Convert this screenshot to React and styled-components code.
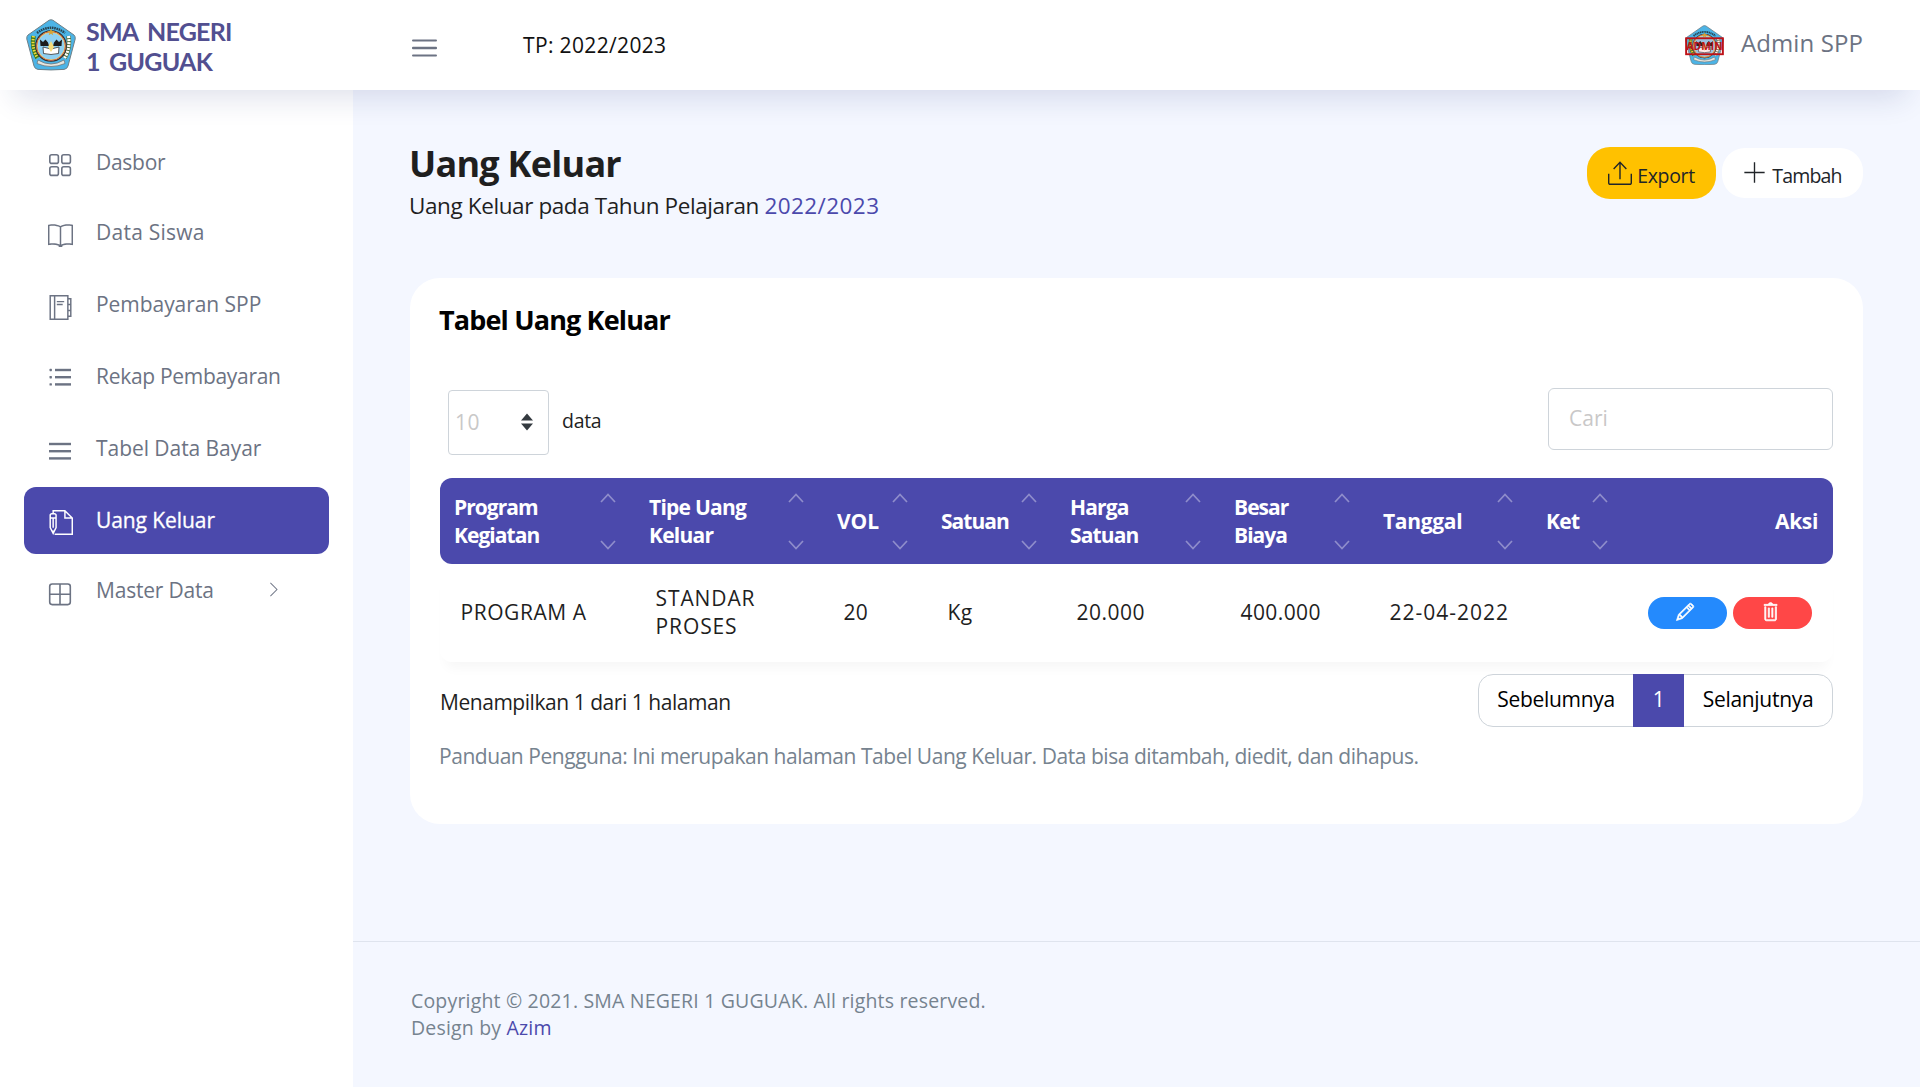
import React from "react";
import styled, { createGlobalStyle } from "styled-components";
import {
  TfiBook,
  TfiAgenda,
  TfiWrite,
  TfiExport,
  TfiPlus,
  TfiPencil,
  TfiTrash,
  TfiAngleRight,
} from "react-icons/tfi";

const PRIMARY = "#4b49ac";

const GlobalStyle = createGlobalStyle`
  *, *::before, *::after { box-sizing: border-box; }
  body {
    margin: 0;
    background: #f4f7ff;
    color: #1f1f1f;
    font-family: "Open Sans", "Noto Sans", sans-serif;
    font-size: 21px;
    line-height: 28px;
  }
`;

const Page = styled.div`
  display: flex;
  flex-direction: column;
  min-height: 1087px;
`;

const Navbar = styled.header`
  position: relative;
  z-index: 2;
  display: flex;
  align-items: center;
  height: 90px;
  padding: 0 57px 0 26px;
  background: #fff;
  box-shadow: 0 22px 30px -14px rgba(31, 45, 110, 0.14);
`;

const Brand = styled.div`
  display: flex;
  align-items: center;
  gap: 10px;
  width: 386px;
`;

const BrandName = styled.div`
  padding-top: 1px;
  color: #524f90;
  font-family: "Lato", sans-serif;
  font-size: 25px;
  font-weight: 700;
  line-height: 30px;
  letter-spacing: -0.75px;
  word-spacing: 4px;
  white-space: nowrap;
`;

const Term = styled.div`
  margin-left: 86px;
  margin-top: -1px;
  color: #111;
  letter-spacing: 0.35px;
`;

const Profile = styled.div`
  display: flex;
  align-items: center;
  gap: 17px;
  margin-left: auto;
  color: #6c7383;
  font-size: 24px;
  letter-spacing: 0.1px;
`;

const ProfileName = styled.span`
  margin-top: -4px;
`;

const Main = styled.div`
  display: flex;
  flex: 1;
`;

const Sidebar = styled.nav`
  display: flex;
  flex-direction: column;
  gap: 5px;
  width: 353px;
  padding: 39px 24px 0;
  background: #fff;
`;

const NavItem = styled.a`
  display: flex;
  align-items: center;
  width: 305px;
  height: ${(p) => (p.$short ? 65 : 67)}px;
  padding: ${(p) => (p.$short ? 2 : 1)}px 0 2px 24px;
  border-radius: 12px;
  color: ${(p) => (p.$active ? "#fff" : "#6c7383")};
  background: ${(p) => (p.$active ? PRIMARY : "transparent")};
  letter-spacing: ${(p) => p.$ls}px;
  ${(p) => p.$active && "margin-bottom: -2px; -webkit-text-stroke: 0.3px #fff;"}

  > svg:first-child {
    flex: none;
    width: 25px;
    height: 25px;
    margin-right: 23px;
    margin-top: ${(p) => p.$drop}px;
  }
`;

const NavLabel = styled.span`
  width: ${(p) => (p.$chevron ? "170px" : "auto")};
  white-space: nowrap;
`;

const Content = styled.main`
  display: flex;
  flex: 1;
  flex-direction: column;
`;

const Wrapper = styled.div`
  height: 851px;
  padding: 52px 57px 0;
`;

const Heading = styled.div`
  display: flex;
  justify-content: space-between;
  height: 136px;
`;

const Title = styled.h3`
  margin: 0 0 0 -1px;
  font-size: 36px;
  font-weight: 700;
  line-height: 44px;
  letter-spacing: -0.75px;
`;

const Subtitle = styled.p`
  margin: 4px 0 0 -1px;
  font-size: 22.5px;
  line-height: 32px;
  letter-spacing: -0.4px;
  span {
    color: ${PRIMARY};
    letter-spacing: 0.43px;
  }
`;

const Actions = styled.div`
  display: flex;
  align-items: flex-start;
  gap: 6px;
  padding-top: 5px;
`;

const ActionButton = styled.button`
  display: flex;
  align-items: center;
  justify-content: center;
  gap: ${(p) => (p.$yellow ? 5 : 6)}px;
  width: ${(p) => (p.$yellow ? 129 : 141)}px;
  height: ${(p) => (p.$yellow ? 52 : 50)}px;
  margin-top: ${(p) => (p.$yellow ? 0 : 1)}px;
  padding: 0;
  border: 0;
  border-radius: 23px;
  background: ${(p) => (p.$yellow ? "#ffc100" : "#fff")};
  color: #212529;
  font-family: inherit;
  font-size: 19.5px;
  letter-spacing: ${(p) => (p.$yellow ? -0.33 : -0.8)}px;
  span {
    padding-top: 4px;
  }
  svg {
    margin-top: -1px;
  }
`;

const Card = styled.section`
  height: 546px;
  padding: 24px 30px 0;
  border-radius: 30px;
  background: #fff;
`;

const CardTitle = styled.h4`
  margin: 0 0 0 -1px;
  color: #010101;
  font-size: 27px;
  font-weight: 700;
  line-height: 36px;
  letter-spacing: -0.85px;
`;

const Controls = styled.div`
  display: flex;
  justify-content: space-between;
  margin-top: 50px;
  height: 90px;
`;

const Length = styled.label`
  display: flex;
  align-items: center;
  gap: 13px;
  height: 67px;
  padding: 2px 0 0 8px;
  font-size: 19.5px;
  letter-spacing: -0.3px;
  > span {
    margin-top: -4px;
  }
`;

const Select = styled.div`
  display: flex;
  align-items: center;
  justify-content: space-between;
  width: 101px;
  height: 65px;
  padding: 0 15px 2px 6px;
  border: 1px solid #ced4da;
  border-radius: 4px;
  color: #c9c8c8;
  font-size: 21px;
  letter-spacing: 0.4px;
`;

const Search = styled.input`
  width: 285px;
  height: 62px;
  padding: 0 20px 2px;
  border: 1px solid #ced4da;
  border-radius: 6px;
  font-family: inherit;
  font-size: 21px;
  &::placeholder {
    color: #c9c8c8;
    opacity: 1;
  }
`;

const Row = styled.div`
  display: grid;
  grid-template-columns: 195px 188px 104px 129px 164px 149px 163px 95px 1fr;
  align-items: center;
`;

const HeadRow = styled(Row)`
  height: 86px;
  padding-bottom: 1px;
  border-radius: 12px;
  background: ${PRIMARY};
  color: #fff;
  font-weight: 700;
`;

const HeadCell = styled.div`
  display: flex;
  align-items: center;
  justify-content: ${(p) => (p.$end ? "flex-end" : "space-between")};
  padding: 0 ${(p) => (p.$end ? 15 : 19)}px 0 14px;
  letter-spacing: ${(p) => p.$ls}px;
  white-space: pre-line;
`;

const BodyRow = styled(Row)`
  height: 98px;
  padding-bottom: 2px;
  border-radius: 12px;
  box-shadow: 0 12px 12px -6px rgba(0, 0, 0, 0.035);
`;

const Cell = styled.div`
  padding-left: 20.5px;
  letter-spacing: ${(p) => p.$ls}px;
  white-space: pre-line;
`;

const RowActions = styled.div`
  display: flex;
  justify-content: flex-end;
  gap: 6px;
  padding: 2px 21px 0 0;
`;

const Pill = styled.button`
  display: flex;
  align-items: center;
  justify-content: center;
  width: 79px;
  height: 32px;
  padding: 0 6px 3px 0;
  border: 0;
  border-radius: 16px;
  background: ${(p) => p.$color};
  color: #fff;
  svg {
    stroke-width: 0.6;
  }
`;

const TableFoot = styled.div`
  display: flex;
  justify-content: space-between;
  margin-top: 12px;
  height: 53px;
`;

const Info = styled.div`
  padding-top: 14px;
  letter-spacing: -0.46px;
`;

const Pagination = styled.div`
  display: flex;
  width: 355px;
  height: 53px;
  border: 1px solid #ced4da;
  border-radius: 15px;
  color: #000;
`;

const PageLink = styled.a`
  display: flex;
  flex: ${(p) => (p.$active ? "0 0 51px" : p.$prev ? "0 0 154px" : "1")};
  align-items: center;
  justify-content: center;
  margin: ${(p) => (p.$active ? "-1px 0" : "0")};
  padding-bottom: 3px;
  background: ${(p) => (p.$active ? PRIMARY : "transparent")};
  color: ${(p) => (p.$active ? "#fff" : "#000")};
  letter-spacing: -0.3px;
`;

const Guide = styled.p`
  margin: 15px 0 0 -1px;
  color: #76838f;
  letter-spacing: -0.455px;
  white-space: nowrap;
`;

const Footer = styled.footer`
  flex: 1;
  padding: 45px 58px 0;
  border-top: 1px solid #dfe4ee;
  color: #76838f;
  font-size: 19.5px;
  line-height: 27px;
  letter-spacing: 0.18px;
  a {
    color: ${PRIMARY};
  }
`;

function Emblem({ size, admin }) {
  return (
    <svg width={size} height={size * 1.03} viewBox="0 0 50 51.5">
      <path
        d="M25 .8 Q26 .8 27 1.3 L48 16 Q49.6 17.5 49.2 20 L42 47 Q41.2 50 38 50.4 Q25 51.5 12 50.4 Q8.8 50 8 47 L.8 20 Q.4 17.5 2 16 L23 1.3 Q24 .8 25 .8Z"
        fill="#4cb4e6"
        stroke="#6f7f86"
        strokeWidth="1"
      />
      <path d="M11 14 Q25 3.500 39 14" fill="none" stroke="#28434f" strokeWidth="2.400" strokeDasharray="1.600 .7" />
      <path d="M7.500 17 Q5.500 29 11.500 39" fill="none" stroke="#38761d" strokeWidth="4.500" />
      <path d="M7.500 17 Q5.500 29 11.500 39" fill="none" stroke="#f1d93a" strokeWidth="3" strokeDasharray="1.500 1.300" />
      <path d="M42.500 17 Q44.500 29 38.500 39" fill="none" stroke="#53713f" strokeWidth="4.500" />
      <path d="M42.500 17 Q44.500 29 38.500 39" fill="none" stroke="#fff" strokeWidth="3.200" strokeDasharray="2 1" />
      <path d="M12 41 Q25 49 38 41 L39 44.500 Q25 50.500 11 44.500Z" fill="#e6e6df" stroke="#6c6c6c" strokeWidth=".7" />
      <circle cx="25" cy="27" r="15.200" fill="#8fd0f2" stroke="#2c2c2c" strokeWidth="1.200" />
      <circle cx="25" cy="27" r="14" fill="none" stroke="#f0d264" strokeWidth="1.300" />
      <circle cx="25" cy="27" r="14.500" fill="none" stroke="#b4302c" strokeWidth=".7" />
      <path d="M14 20.500 L17 23 L19.500 20.500 L22 23.500 L23 27 L14.500 27Z M36 20.500 L33 23 L30.500 20.500 L28 23.500 L27 27 L35.500 27Z" fill="#1b1b1b" />
      <path d="M17 28 L25 30 L33 28 L32.500 34.500 Q25 36.500 17.500 34.500Z" fill="#fff" stroke="#333" strokeWidth=".8" />
      <path d="M25 22 L28 28 L25 33 L22 28Z" fill="#f6dc7a" />
      <path d="M25 9.500 L26 12 L28.500 12 L26.500 13.700 L27.300 16.200 L25 14.700 L22.700 16.200 L23.500 13.700 L21.500 12 L24 12Z" fill="#d6a437" />
      {admin && (
        <>
          <rect x="1.400" y="17" width="47.200" height="20.500" fill="rgba(255,80,80,.12)" stroke="#bd1117" strokeWidth="2.400" />
          <text
            x="25"
            y="32.300"
            textAnchor="middle"
            fill="#bd1117"
            fontFamily="Open Sans, sans-serif"
            fontSize="13"
            fontWeight="700"
          >
            ADMIN
          </text>
        </>
      )}
    </svg>
  );
}

const MenuSvg = styled.svg`
  margin-top: 5px;
  fill: #6c7383;
`;

function MenuIcon() {
  return (
    <MenuSvg width="25" height="18" viewBox="0 0 25 18">
      <rect y="0.500" width="25" height="2" rx="1" />
      <rect y="7.700" width="25" height="2.600" rx="1" />
      <rect y="15.500" width="25" height="2" rx="1" />
    </MenuSvg>
  );
}

const GridIcon = () => (
  <svg viewBox="0 0 25 25" fill="none" stroke="currentColor" strokeWidth="1.600">
    {[[1.800, 1.800], [13.800, 1.800], [1.800, 13.800], [13.800, 13.800]].map(([x, y]) => (
      <rect key={`${x}-${y}`} x={x} y={y} width="8.600" height="8.600" rx="2" />
    ))}
  </svg>
);

const ListIcon = ({ dots }) => (
  <svg viewBox="0 0 25 25" fill="currentColor">
    {[3.800, 11, 18.200].map((y) => (
      <React.Fragment key={y}>
        {dots && <rect x="1.500" y={y} width="2.400" height="2.400" rx=".6" />}
        <rect x={dots ? 7 : 1} y={y} width={dots ? 16 : 22} height="2.400" />
      </React.Fragment>
    ))}
  </svg>
);

const TableIcon = () => (
  <svg viewBox="0 0 25 25" fill="none" stroke="currentColor" strokeWidth="1.600">
    <rect x="1.700" y="2" width="20.600" height="20.600" rx="2.500" />
    <path d="M12 2v20.600M1.700 12.300h20.600" />
  </svg>
);

const SortIcon = () => (
  <svg width="16" height="58" viewBox="0 0 16 58" fill="none" stroke="#8f8dcb" strokeWidth="1.700">
    <path d="M1 10 8 2.500l7 7.500M1 49l7 7.500 7-7.500" />
  </svg>
);

const SelectArrows = () => (
  <svg width="12" height="18" viewBox="0 0 12 18" fill="#343a40">
    <path d="M0 7.500 6 .5l6 7zM0 10.500l6 7 6-7z" />
  </svg>
);

const MENU = [
  { label: "Dasbor", icon: <GridIcon />, ls: -0.28, drop: 7, short: true },
  { label: "Data Siswa", icon: <TfiBook />, ls: 0.25, drop: 6 },
  { label: "Pembayaran SPP", icon: <TfiAgenda />, ls: -0.05, drop: 6 },
  { label: "Rekap Pembayaran", icon: <ListIcon dots />, ls: -0.3, drop: 3 },
  { label: "Tabel Data Bayar", icon: <ListIcon />, ls: -0.05, drop: 6 },
  { label: "Uang Keluar", icon: <TfiWrite />, ls: -0.08, drop: 4, active: true },
  { label: "Master Data", icon: <TableIcon />, ls: -0.2, drop: 9, short: true, chevron: true },
];

const COLUMNS = [
  ["Program\nKegiatan", -0.95],
  ["Tipe Uang\nKeluar", -0.75],
  ["VOL", -0.1],
  ["Satuan", -0.97],
  ["Harga\nSatuan", -0.85],
  ["Besar\nBiaya", -0.97],
  ["Tanggal", -0.3],
  ["Ket", -0.7],
];

const RECORD = [
  ["PROGRAM A", 0.55],
  ["STANDAR\nPROSES", 0.9],
  ["20", 0.3],
  ["Kg", 0.3],
  ["20.000", 0.5],
  ["400.000", 0.4],
  ["22-04-2022", 1],
  ["", 0],
];

export default function App() {
  return (
    <Page>
      <GlobalStyle />
      <Navbar>
        <Brand>
          <Emblem size={50} />
          <BrandName>
            SMA NEGERI
            <br />1 GUGUAK
          </BrandName>
        </Brand>
        <MenuIcon />
        <Term>TP: 2022/2023</Term>
        <Profile>
          <Emblem size={39} admin />
          <ProfileName>Admin SPP</ProfileName>
        </Profile>
      </Navbar>
      <Main>
        <Sidebar>
          {MENU.map((m) => (
            <NavItem key={m.label} $active={m.active} $short={m.short} $ls={m.ls} $drop={m.drop}>
              {m.icon}
              <NavLabel $chevron={m.chevron}>{m.label}</NavLabel>
              {m.chevron && <TfiAngleRight size={15} />}
            </NavItem>
          ))}
        </Sidebar>
        <Content>
          <Wrapper>
            <Heading>
              <div>
                <Title>Uang Keluar</Title>
                <Subtitle>
                  Uang Keluar pada Tahun Pelajaran <span>2022/2023</span>
                </Subtitle>
              </div>
              <Actions>
                <ActionButton $yellow>
                  <TfiExport size={24} />
                  <span>Export</span>
                </ActionButton>
                <ActionButton>
                  <TfiPlus size={23} />
                  <span>Tambah</span>
                </ActionButton>
              </Actions>
            </Heading>
            <Card>
              <CardTitle>Tabel Uang Keluar</CardTitle>
              <Controls>
                <Length>
                  <Select>
                    10
                    <SelectArrows />
                  </Select>
                  <span>data</span>
                </Length>
                <Search placeholder="Cari" />
              </Controls>
              <HeadRow>
                {COLUMNS.map(([label, ls]) => (
                  <HeadCell key={label} $ls={ls}>
                    {label}
                    <SortIcon />
                  </HeadCell>
                ))}
                <HeadCell $end $ls={-0.35}>
                  Aksi
                </HeadCell>
              </HeadRow>
              <BodyRow>
                {RECORD.map(([text, ls], i) => (
                  <Cell key={i} $ls={ls}>
                    {text}
                  </Cell>
                ))}
                <RowActions>
                  <Pill $color="#248afd">
                    <TfiPencil size={20} />
                  </Pill>
                  <Pill $color="#ff4747">
                    <TfiTrash size={20} />
                  </Pill>
                </RowActions>
              </BodyRow>
              <TableFoot>
                <Info>Menampilkan 1 dari 1 halaman</Info>
                <Pagination>
                  <PageLink $prev>Sebelumnya</PageLink>
                  <PageLink $active>1</PageLink>
                  <PageLink>Selanjutnya</PageLink>
                </Pagination>
              </TableFoot>
              <Guide>
                Panduan Pengguna: Ini merupakan halaman Tabel Uang Keluar. Data bisa ditambah, diedit, dan dihapus.
              </Guide>
            </Card>
          </Wrapper>
          <Footer>
            Copyright © 2021. SMA NEGERI 1 GUGUAK. All rights reserved.
            <br />
            Design by <a>Azim</a>
          </Footer>
        </Content>
      </Main>
    </Page>
  );
}
